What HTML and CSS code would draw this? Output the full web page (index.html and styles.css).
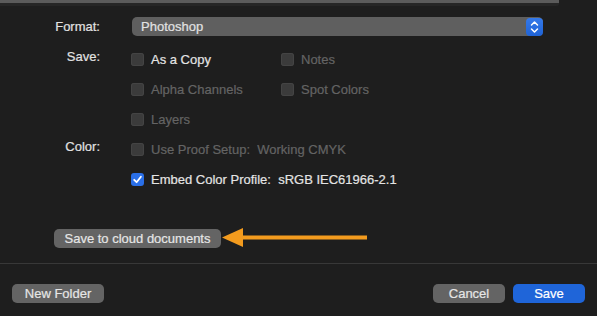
FILE: index.html
```html
<!DOCTYPE html>
<html lang="en">
  <head>
    <meta charset="UTF-8" />
    <title>Save As</title>
    <link rel="stylesheet" href="styles.css">
  </head>
  <body>
    <div class="topbar"></div>

    <div class="form">
      <div class="label fmt">Format:</div>
      <div class="popup">
        <span>Photoshop</span>
        <span class="stepper">
          <svg width="17" height="18" viewBox="0 0 17 18">
            <path d="M5.5 7 L8.5 4 L11.5 7" fill="none" stroke="#fff" stroke-width="1.5" stroke-linecap="round" stroke-linejoin="round"/>
            <path d="M5.5 11 L8.5 14 L11.5 11" fill="none" stroke="#fff" stroke-width="1.5" stroke-linecap="round" stroke-linejoin="round"/>
          </svg>
        </span>
      </div>

      <div class="label">Save:</div>
      <div class="opts two">
        <div class="check"><span class="box"></span>As a Copy</div>
        <div class="check off"><span class="box"></span>Notes</div>
        <div class="check off"><span class="box"></span>Alpha Channels</div>
        <div class="check off"><span class="box"></span>Spot Colors</div>
        <div class="check off"><span class="box"></span>Layers</div>
      </div>

      <div class="label">Color:</div>
      <div class="opts">
        <div class="check off"><span class="box"></span>Use Proof Setup:&nbsp; Working CMYK</div>
        <div class="check">
          <span class="box on">
            <svg width="13" height="13" viewBox="0 0 13 13">
              <path d="M3.2 6.8 L5.6 9.2 L9.9 3.8" fill="none" stroke="#fff" stroke-width="1.8" stroke-linecap="round" stroke-linejoin="round"/>
            </svg>
          </span>Embed Color Profile:&nbsp; sRGB IEC61966-2.1
        </div>
      </div>
    </div>

    <div class="cloud">
      <button class="btn cloud-btn">Save to cloud documents</button>
      <svg class="arrow" width="146" height="20" viewBox="0 0 146 20">
        <path d="M0 9.5 L21 0 L21 19 Z" fill="#f39b1e"/>
        <rect x="19" y="7.5" width="126" height="4" fill="#f39b1e"/>
      </svg>
    </div>

    <div class="sep"></div>

    <div class="footer">
      <button class="btn wide">New Folder</button>
      <div class="spacer"></div>
      <button class="btn act">Cancel</button>
      <button class="btn act primary">Save</button>
    </div>
  </body>
</html>
```

FILE: styles.css
```css
body {
  margin: 0;
  background-color: #1e1e1e;
  color: #e2e2e2;
  font-family: "Liberation Sans", Arial, sans-serif;
  font-size: 13px;
  width: 597px;
  height: 316px;
  overflow: hidden;
}

.topbar {
  width: 559px;
  height: 3px;
  background-color: #5b5b5b;
  border-bottom-right-radius: 3px;
  border-bottom: 3px solid #262626;
}

.form {
  display: grid;
  grid-template-columns: 100px 1fr;
  column-gap: 31px;
  padding-top: 11px;
}

.label {
  text-align: right;
  line-height: 26px;
  -webkit-text-stroke: 0.2px #e2e2e2;
}

.fmt {
  line-height: 19px;
  margin-bottom: 8px;
}

.popup {
  display: flex;
  align-items: center;
  justify-content: space-between;
  width: 411px;
  height: 19px;
  margin-left: 1px;
  padding-left: 9px;
  background-color: #5f5f5f;
  border-radius: 5px;
  box-sizing: border-box;
  margin-bottom: 8px;
  -webkit-text-stroke: 0.2px #e2e2e2;
}

.stepper {
  display: flex;
  width: 17px;
  height: 18px;
  background: linear-gradient(#3479ea, #1f63d6);
  border-radius: 4px;
}

.opts {
  display: grid;
  grid-auto-rows: 30px;
}

.opts.two {
  grid-template-columns: 150px auto;
}

.check {
  display: flex;
  align-items: center;
  gap: 7px;
  color: #e4e4e4;
  -webkit-text-stroke: 0.2px currentColor;
}

.check.off {
  color: #646464;
}

.box {
  display: inline-flex;
  width: 13px;
  height: 13px;
  margin-top: 1px;
  border-radius: 3px;
  background-color: #3b3b3b;
  box-shadow: inset 0 0 0 1px #444;
}

.box.on {
  background-color: #2a6fe8;
  box-shadow: none;
}

.cloud {
  display: flex;
  align-items: center;
  margin-top: 34px;
  padding-left: 54px;
}

.btn {
  font-family: "Liberation Sans", Arial, sans-serif;
  font-size: 13px;
  color: #e6e6e6;
  background-color: #646464;
  border: none;
  border-radius: 5px;
  height: 19px;
  line-height: 19px;
  padding: 0 7px;
  margin: 0;
  -webkit-text-stroke: 0.2px currentColor;
}

.cloud-btn {
  width: 167px;
}

.arrow {
  margin-left: 1px;
  display: block;
}

.sep {
  height: 1px;
  background-color: #383838;
  margin-top: 15px;
}

.footer {
  display: flex;
  gap: 8px;
  padding: 20px 12px 0 12px;
}

.wide {
  width: 92px;
}

.spacer {
  flex: 1;
}

.act {
  width: 72px;
}

.primary {
  background-color: #1f65d9;
  color: #ffffff;
}
```
